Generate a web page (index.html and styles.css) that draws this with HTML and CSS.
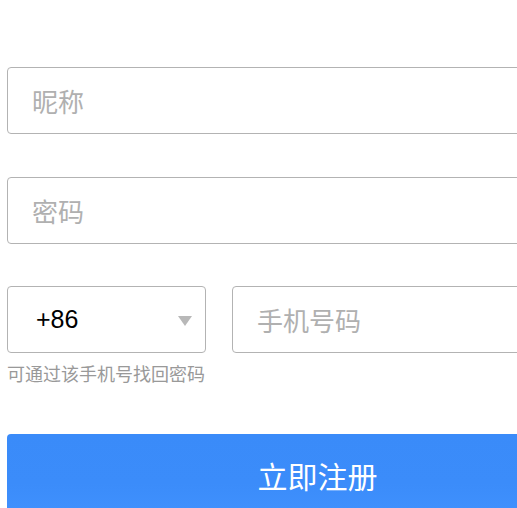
FILE: index.html
```html
<!DOCTYPE html>
<html lang="zh-CN">
<head>
<meta charset="utf-8">
<title>注册</title>
<link rel="stylesheet" href="styles.css">
</head>
<body>
<form class="form">
  <div class="field"><span class="placeholder">昵称</span></div>
  <div class="field field-gap2"><span class="placeholder">密码</span></div>
  <div class="phone-row">
    <div class="select">
      <span class="code">+86</span>
      <span class="caret"></span>
    </div>
    <div class="field phone"><span class="placeholder">手机号码</span></div>
  </div>
  <p class="hint">可通过该手机号找回密码</p>
  <div class="submit">立即注册</div>
</form>
</body>
</html>
```
FILE: styles.css
```css
html, body {
  margin: 0;
  padding: 0;
  background: #fff;
  overflow: hidden;
}
body {
  font-family: "Noto Sans CJK SC", "Liberation Sans", sans-serif;
}
.form {
  width: 621px;
  padding: 67px 0 0 7px;
  margin: 0;
}
.field {
  box-sizing: border-box;
  height: 67px;
  border: 1px solid #b3b3b3;
  border-radius: 4px;
  display: flex;
  align-items: center;
  padding: 0 24px;
  margin-bottom: 43px;
}
.field-gap2 {
  margin-bottom: 42px;
}
.placeholder {
  font-size: 26px;
  color: #b0b0b0;
  line-height: 1;
}
.phone-row {
  display: flex;
  gap: 26px;
}
.select {
  box-sizing: border-box;
  width: 199px;
  height: 67px;
  flex: none;
  border: 1px solid #b3b3b3;
  border-radius: 4px;
  display: flex;
  align-items: center;
  justify-content: space-between;
  padding: 0 13px 0 28px;
}
.code {
  font-family: "Liberation Sans", Arial, sans-serif;
  font-size: 25px;
  color: #000;
}
.caret {
  width: 0;
  height: 0;
  border-left: 7.5px solid transparent;
  border-right: 7.5px solid transparent;
  border-top: 10px solid #b8b8b8;
  margin-top: 2px;
}
.phone {
  flex: 1;
  margin-bottom: 0;
}
.hint {
  margin: 8px 0 0;
  font-size: 18px;
  line-height: 24px;
  color: #999;
}
.submit {
  margin-top: 49px;
  height: 82px;
  border-radius: 4px;
  background: linear-gradient(#3a8bf9, #3b8cfa 60%, #4091fe);
  color: #fff;
  font-size: 30px;
  text-align: center;
  line-height: 82px;
}
```
